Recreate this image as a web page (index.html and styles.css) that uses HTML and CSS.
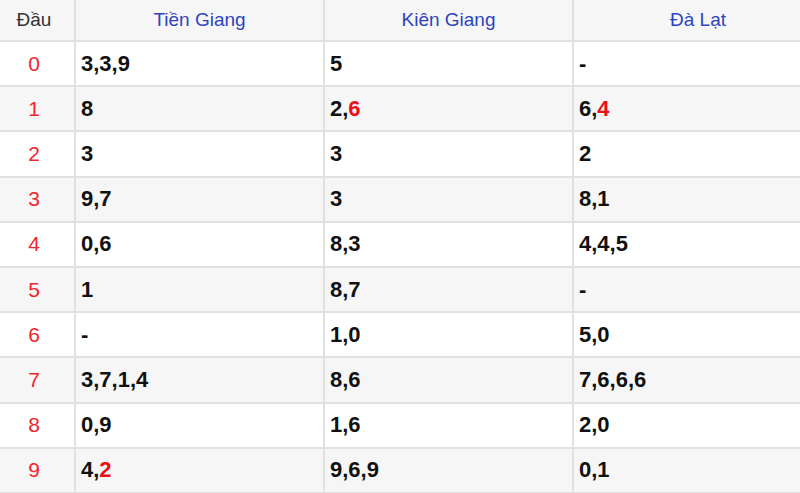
FILE: index.html
```html
<!DOCTYPE html>
<html lang="vi">
<head>
<meta charset="utf-8">
<title>Lô tô</title>
<link rel="stylesheet" href="styles.css">
</head>
<body>
<div class="table">
  <div class="row head">
    <div class="cell dau">Đầu</div>
    <div class="cell th">Tiền Giang</div>
    <div class="cell th">Kiên Giang</div>
    <div class="cell th">Đà Lạt</div>
  </div>
  <div class="row">
    <div class="cell num">0</div>
    <div class="cell val">3,3,9</div>
    <div class="cell val">5</div>
    <div class="cell val">-</div>
  </div>
  <div class="row alt">
    <div class="cell num">1</div>
    <div class="cell val">8</div>
    <div class="cell val">2,<span class="hl">6</span></div>
    <div class="cell val">6,<span class="hl">4</span></div>
  </div>
  <div class="row">
    <div class="cell num">2</div>
    <div class="cell val">3</div>
    <div class="cell val">3</div>
    <div class="cell val">2</div>
  </div>
  <div class="row alt">
    <div class="cell num">3</div>
    <div class="cell val">9,7</div>
    <div class="cell val">3</div>
    <div class="cell val">8,1</div>
  </div>
  <div class="row">
    <div class="cell num">4</div>
    <div class="cell val">0,6</div>
    <div class="cell val">8,3</div>
    <div class="cell val">4,4,5</div>
  </div>
  <div class="row alt">
    <div class="cell num">5</div>
    <div class="cell val">1</div>
    <div class="cell val">8,7</div>
    <div class="cell val">-</div>
  </div>
  <div class="row">
    <div class="cell num">6</div>
    <div class="cell val">-</div>
    <div class="cell val">1,0</div>
    <div class="cell val">5,0</div>
  </div>
  <div class="row alt">
    <div class="cell num">7</div>
    <div class="cell val">3,7,1,4</div>
    <div class="cell val">8,6</div>
    <div class="cell val">7,6,6,6</div>
  </div>
  <div class="row">
    <div class="cell num">8</div>
    <div class="cell val">0,9</div>
    <div class="cell val">1,6</div>
    <div class="cell val">2,0</div>
  </div>
  <div class="row alt">
    <div class="cell num">9</div>
    <div class="cell val">4,<span class="hl">2</span></div>
    <div class="cell val">9,6,9</div>
    <div class="cell val">0,1</div>
  </div>
</div>
</body>
</html>
```

FILE: styles.css
```css
html, body {
  margin: 0;
  padding: 0;
  background: #ffffff;
  overflow: hidden;
}

body {
  width: 800px;
  height: 493px;
  font-family: "Liberation Sans", Arial, sans-serif;
}

.table {
  width: 824px;
}

.row {
  display: grid;
  grid-template-columns: 76px 249px 249px 250px;
  height: 45.2px;
  box-sizing: border-box;
  background: #ffffff;
}

.row.alt,
.row.head {
  background: #f6f6f6;
}

.row.head {
  height: 42px;
}

.cell {
  display: flex;
  align-items: center;
  box-sizing: border-box;
  border-right: 2px solid #e1e1e1;
  border-bottom: 2px solid #e1e1e1;
  min-width: 0;
}

.dau,
.num {
  justify-content: center;
  padding-right: 6px;
}

.dau {
  font-size: 19px;
  color: #333333;
}

.th {
  justify-content: center;
  font-size: 19px;
  color: #2d44c0;
}

.num {
  font-size: 21px;
  color: #f2252b;
}

.val {
  padding-left: 5px;
  font-size: 22px;
  font-weight: bold;
  color: #111111;
}

.hl {
  color: #ee0f16;
}
```
